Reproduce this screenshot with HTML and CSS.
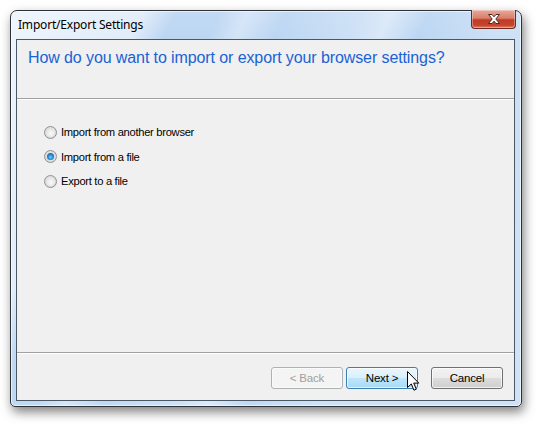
FILE: index.html
```html
<!DOCTYPE html>
<html>
<head>
<meta charset="utf-8">
<link rel="stylesheet" href="styles.css">
</head>
<body>
<div class="window">
  <div class="titlebar">
    <span class="title">Import/Export Settings</span>
    <div class="close">
      <svg width="16" height="12" viewBox="0 0 16 12"><path d="M2.5 1.5h3.5l2 2.3 2-2.3h3.5l-3.7 4.5 3.7 4.5h-3.5l-2-2.3-2 2.3h-3.5l3.7-4.5z" fill="#fff" stroke="#4a2a26" stroke-width="1" stroke-linejoin="round"/></svg>
    </div>
  </div>
  <div class="client">
    <div class="header">How do you want to import or export your browser settings?</div>
    <div class="options">
      <label class="option"><span class="radio"></span><span>Import from another browser</span></label>
      <label class="option"><span class="radio checked"></span><span>Import from a file</span></label>
      <label class="option"><span class="radio"></span><span>Export to a file</span></label>
    </div>
    <div class="footer">
      <button class="btn disabled">&lt; Back</button>
      <button class="btn hover">Next &gt;
        <svg class="cursor" width="13" height="21" viewBox="0 0 13 21"><path d="M0.5 0.5V16.5L4.3 12.9L6.9 19.2L9.3 18.2L6.7 12.1H11.8Z" fill="#fff" stroke="#000" stroke-width="1" stroke-linejoin="miter"/></svg>
      </button>
      <button class="btn cancel">Cancel</button>
    </div>
  </div>
</div>
</body>
</html>
```

FILE: styles.css
```css
html, body {
  margin: 0;
  padding: 0;
  background: #ffffff;
}
body {
  width: 541px;
  height: 426px;
  overflow: hidden;
  padding: 10px 0 0 10px;
  box-sizing: border-box;
}
.window {
  width: 512px;
  height: 397px;
  box-sizing: border-box;
  border: 1px solid #2e3236;
  border-radius: 7px 7px 5px 5px;
  box-shadow: 2px 5px 11px rgba(0,0,0,0.5), inset 0 0 0 1px rgba(255,255,255,0.6);
  background:
    linear-gradient(115deg, rgba(255,255,255,0.75) 0px, rgba(255,255,255,0.55) 120px, rgba(255,255,255,0) 150px, rgba(255,255,255,0) 190px, rgba(255,255,255,0.35) 215px, rgba(255,255,255,0) 250px, rgba(255,255,255,0.25) 320px, rgba(255,255,255,0.45) 345px, rgba(255,255,255,0) 380px, rgba(255,255,255,0.25) 450px),
    linear-gradient(180deg, #c2daf4 0px, #b9d4f1 40px, #c0d9f3 100%);
  display: flex;
  flex-direction: column;
  padding: 0 6px 5px 5px;
  font-family: "Liberation Sans", Arial, sans-serif;
}
.titlebar {
  height: 28px;
  display: flex;
  justify-content: space-between;
  align-items: flex-start;
  flex: none;
}
.title {
  font-family: "Noto Sans", "Open Sans", sans-serif;
  font-size: 12px;
  color: #000;
  padding: 6px 0 0 2px;
  line-height: 16px;
  letter-spacing: -0.2px;
}
.close {
  width: 45px;
  height: 19px;
  margin-top: -1px;
  margin-right: -1px;
  box-sizing: border-box;
  border: 1px solid #6a2a22;
  border-top: none;
  border-radius: 0 0 4px 4px;
  background: linear-gradient(180deg, #e8a899 0%, #d9806c 45%, #c23a24 55%, #c6452d 85%, #d98468 100%);
  box-shadow: inset 0 0 0 1px rgba(255,255,255,0.35);
  display: flex;
  align-items: center;
  justify-content: center;
}
.client {
  flex: 1;
  display: flex;
  flex-direction: column;
  border: 1px solid #4a5866;
  background: #f0f0f0;
}
.header {
  height: 59px;
  box-sizing: border-box;
  padding: 8px 0 0 11px;
  font-size: 16px;
  line-height: 19px;
  letter-spacing: -0.1px;
  color: #1a62d6;
  border-bottom: 1px solid #a0a0a0;
  box-shadow: 0 1px 0 #ffffff;
  flex: none;
}
.options {
  flex: 1;
  padding: 21px 0 0 27px;
  display: flex;
  flex-direction: column;
}
.option {
  height: 24.5px;
  display: flex;
  align-items: center;
  font-size: 11.2px;
  letter-spacing: -0.3px;
  color: #000;
}
.radio {
  width: 13px;
  height: 13px;
  box-sizing: border-box;
  border-radius: 50%;
  border: 1px solid #8f9294;
  background: radial-gradient(circle at 50% 45%, #f4f4f4 0%, #e2e2e2 45%, #cfcfcf 100%);
  margin-right: 4px;
  position: relative;
  flex: none;
}
.radio::after {
  content: "";
  position: absolute;
  left: 1px;
  top: 1px;
  width: 9px;
  height: 9px;
  border-radius: 50%;
  background: radial-gradient(circle at 55% 60%, #fafafa 0%, #e6e6e6 60%, #d6d6d6 100%);
}
.radio.checked::after {
  left: 2px;
  top: 2px;
  width: 7px;
  height: 7px;
  background: radial-gradient(circle at 50% 60%, #7cd3ff 0%, #2c8ed8 40%, #1b5a92 85%, #14426e 100%);
}
.footer {
  height: 48px;
  box-sizing: border-box;
  border-top: 1px solid #a0a0a0;
  box-shadow: inset 0 1px 0 #ffffff;
  display: flex;
  justify-content: flex-end;
  align-items: flex-start;
  padding: 14px 11px 0 0;
  flex: none;
}
.btn {
  width: 72px;
  height: 22px;
  box-sizing: border-box;
  border-radius: 3px;
  font-family: "Liberation Sans", Arial, sans-serif;
  font-size: 11.5px;
  letter-spacing: -0.2px;
  padding: 0;
  position: relative;
}
.btn.disabled {
  border: 1px solid #adb2b5;
  background: #f4f4f4;
  color: #a0a0a0;
  box-shadow: inset 0 0 0 1px #fafafa;
}
.btn.hover {
  margin-left: 3px;
  border: 1px solid #3c7fb1;
  background: linear-gradient(180deg, #eaf6fd 0%, #d9f0fc 50%, #bee6fd 51%, #a7d9f5 100%);
  color: #000;
  box-shadow: inset 0 0 0 1px rgba(255,255,255,0.7);
}
.btn.cancel {
  margin-left: 13px;
  border: 1px solid #707070;
  background: linear-gradient(180deg, #f2f2f2 0%, #ebebeb 50%, #dddddd 51%, #cfcfcf 100%);
  color: #000;
  box-shadow: inset 0 0 0 1px rgba(255,255,255,0.7);
}
.cursor {
  position: absolute;
  left: 60px;
  top: 3px;
}
```
